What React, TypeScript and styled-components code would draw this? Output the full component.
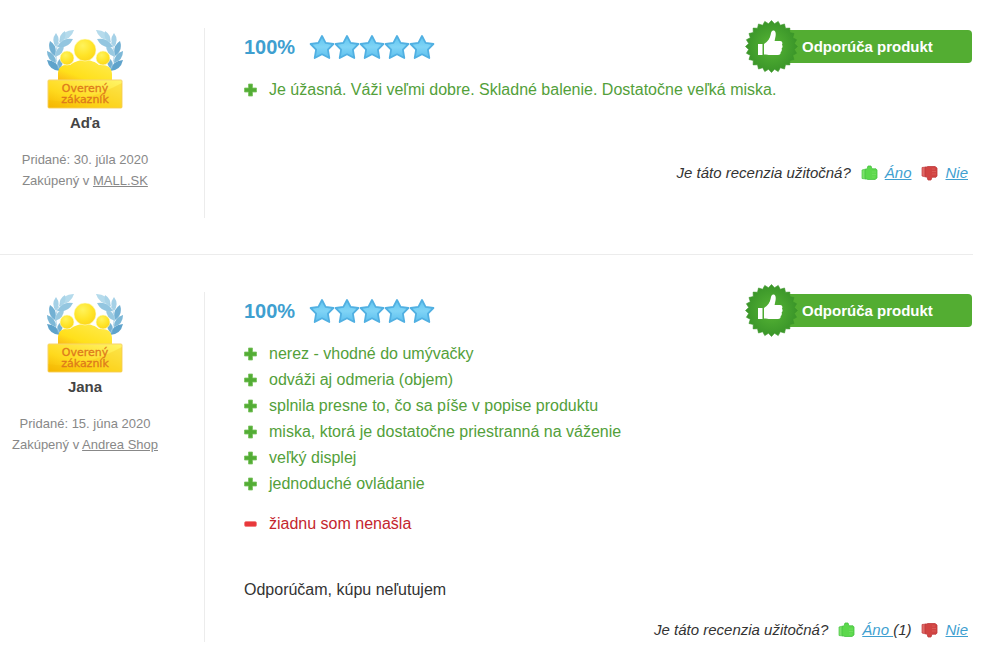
import React from 'react';
import styled, { createGlobalStyle } from 'styled-components';

const GlobalStyle = createGlobalStyle`
  * { box-sizing: border-box; }
  body {
    margin: 0;
    background: #fff;
    color: #333;
    font: 16px/26px "Liberation Sans", Arial, sans-serif;
  }
`;

const ReviewList = styled.main`
  padding-right: 16px;
`;

const ReviewRow = styled.article`
  display: flex;
  padding: 28px 0 36px;

  & + & {
    border-top: 1px solid #ececec;
    padding-top: 37px;
  }
`;

const Author = styled.aside`
  flex: 0 0 204px;
  min-height: 190px;
  padding-right: 34px;
  color: #888;
  text-align: center;

  svg { display: block; margin: 0 auto; }
`;

const AuthorName = styled.h2`
  margin: 0 0 16px;
  color: #444;
  font-size: 15px;
  line-height: 21px;
`;

const Meta = styled.p`
  margin: 0;
  font-size: 13px;
  line-height: 21px;
`;

const ShopLink = styled.a`
  color: inherit;
`;

const Content = styled.div`
  flex: 1;
  min-width: 0;
  border-left: 1px solid #ececec;
  padding-left: 39px;
`;

const Header = styled.header`
  display: flex;
  align-items: center;
  justify-content: space-between;
  padding: 2px 1px 0 0;
  margin-bottom: 14px;
`;

const Rating = styled.div`
  display: flex;
  align-items: center;
  gap: 14px;
  color: #3f9fd0;
  font-size: 20px;
  font-weight: bold;

  svg { display: block; }
`;

const Recommendation = styled.div`
  position: relative;
  width: 201px;
  padding-left: 31px;
  border-radius: 4px;
  background: #53ad32;
  color: #fff;
  font-size: 15px;
  font-weight: bold;
  line-height: 33px;

  svg {
    position: absolute;
    left: -27px;
    top: -11px;
  }
`;

const Body = styled.div`
  min-height: 69px;
`;

const Points = styled.ul<{ $negative?: boolean }>`
  margin: 0;
  padding: 0;
  list-style: none;
  color: ${(p) => (p.$negative ? '#c4262e' : '#53a03a')};

  & + & { margin-top: 14px; }
`;

const Point = styled.li`
  display: flex;
  align-items: center;
  gap: 12px;

  svg { flex: none; }
`;

const Summary = styled.p`
  margin: 40px 0 0;
`;

const Helpful = styled.footer`
  display: flex;
  align-items: center;
  justify-content: flex-end;
  gap: 10px;
  margin-top: 15px;
  padding-right: 5px;
  font-size: 15px;
  font-style: italic;
  line-height: 24px;
`;

const Vote = styled.span`
  display: flex;
  align-items: center;
  gap: 7px;
`;

const VoteLink = styled.a`
  color: #3f9fd0;
  white-space: pre;
`;

interface Leaf {
  base: [number, number];
  tip: [number, number];
  color: string;
}

const leaves: Leaf[] = [
  { base: [13, 41], tip: [0, 30], color: '#5fa3cb' },
  { base: [11, 40], tip: [15, 27], color: '#74b0d2' },
  { base: [9, 33], tip: [0, 21], color: '#7db8d7' },
  { base: [8, 26], tip: [3, 11], color: '#72b0d3' },
  { base: [8, 27], tip: [17, 15], color: '#98c9e1' },
  { base: [9, 17], tip: [9, 3], color: '#a5d1e7' },
  { base: [10, 17], tip: [26, 9], color: '#93c6e0' },
  { base: [13, 10], tip: [27, 0], color: '#b5dbec' },
  { base: [13, 13], tip: [18, 1], color: '#a9d4e8' },
];

function Laurel() {
  return (
    <g>
      {leaves.map(({ base, tip, color }, i) => {
        const dx = tip[0] - base[0];
        const dy = tip[1] - base[1];
        const mx = base[0] + dx * 0.5;
        const my = base[1] + dy * 0.5;
        return (
          <path
            key={i}
            d={`M${base}Q${mx - dy * 0.38} ${my + dx * 0.38} ${tip}Q${mx + dy * 0.38} ${my - dx * 0.38} ${base}Z`}
            fill={color}
          />
        );
      })}
      <path d="M15 43C7 32 7 18 14 9" fill="none" stroke="#a3cde3" strokeWidth=".8" />
    </g>
  );
}

function VerifiedBadge() {
  return (
    <svg width="76" height="84" viewBox="0 0 76 84" role="img" aria-label="Overený zákazník">
      <defs>
        <radialGradient id="head" cx=".4" cy=".3" r=".75">
          <stop offset="0" stopColor="#fff35c" />
          <stop offset=".6" stopColor="#ffe427" />
          <stop offset="1" stopColor="#fcd51a" />
        </radialGradient>
        <linearGradient id="people" x1="0" y1="1" x2="1" y2="0">
          <stop offset="0" stopColor="#fab614" />
          <stop offset=".3" stopColor="#ffe01b" />
          <stop offset="1" stopColor="#ffec51" />
        </linearGradient>
        <linearGradient id="plate" x1="0" y1="1" x2="1" y2="0">
          <stop offset="0" stopColor="#f5b400" />
          <stop offset=".35" stopColor="#ffd91d" />
          <stop offset="1" stopColor="#fff568" />
        </linearGradient>
      </defs>
      <g transform="translate(0 2)">
        <Laurel />
        <g transform="translate(76 0) scale(-1 1)"><Laurel /></g>
        <path d="M11 51V44C11 37 16 34 23 35C28 31 34 30 38 30C43 30 49 32 52 35C60 34 65 38 65 44V51Z" fill="url(#people)" />
        <g fill="url(#head)" stroke="#fffbd0" strokeWidth=".6">
          <circle cx="20" cy="28" r="7" />
          <circle cx="56" cy="28" r="7" />
          <circle cx="38" cy="20" r="11" />
        </g>
        <rect x="1" y="50" width="74" height="28" rx="1" fill="url(#plate)" stroke="#f7d36a" />
        <path d="M1 70Q32 76 75 53V78H1Z" fill="#f4b900" opacity=".25" />
        <g fill="#de7a1c" stroke="#de7a1c" strokeWidth=".3" fontFamily="DejaVu Sans, sans-serif" fontSize="11" textAnchor="middle">
          <text x="38" y="62">Overený</text>
          <text x="38" y="73">zákazník</text>
        </g>
      </g>
    </svg>
  );
}

function Stars() {
  return (
    <svg width="126" height="26" viewBox="0 0 126 26" role="img" aria-label="5 z 5">
      <defs>
        <linearGradient id="star" x1="0" y1="0" x2="0" y2="1">
          <stop offset="0" stopColor="#5ec4ef" />
          <stop offset=".5" stopColor="#80d4f6" />
          <stop offset="1" stopColor="#5cbfee" />
        </linearGradient>
      </defs>
      {[0, 1, 2, 3, 4].map((n) => (
        <path
          key={n}
          transform={`translate(${n * 25} 0)`}
          d="M13 2L16.6 8.8L24.4 10L18.9 15.6L20.3 24L13 20.3L5.7 24L7.1 15.6L1.6 10L9.4 8.8Z"
          fill="url(#star)" stroke="#51b0e2" strokeWidth="1.8" strokeLinejoin="round"
        />
      ))}
    </svg>
  );
}

const sealPoints = Array.from({ length: 48 }, (_, i) => {
  const angle = (i * Math.PI) / 24;
  const radius = i % 2 ? 23 : 26;
  return `${(27.5 + radius * Math.cos(angle)).toFixed(2)},${(27.5 + radius * Math.sin(angle)).toFixed(2)}`;
}).join(' ');

function Seal() {
  return (
    <svg width="55" height="55" viewBox="0 0 55 55" aria-hidden="true">
      <defs>
        <radialGradient id="seal">
          <stop offset="0" stopColor="#5bb637" />
          <stop offset=".5" stopColor="#48a52f" />
          <stop offset="1" stopColor="#3a9529" />
        </radialGradient>
      </defs>
      <polygon points={sealPoints} fill="url(#seal)" stroke="#3a9529" strokeWidth=".6" strokeLinejoin="round" />
      <path d="M14 25H18.5V36H14Z" fill="#fff" />
      <path d="M20 25C24 22.5 26 19.5 26.7 15.5C27 12.8 28 11.5 29.3 11.5C31.6 11.5 32 14 31.6 17L30.6 22H36C38.2 22 39 24 38 25.8C39 27 38.7 28.8 37.6 29.5C38.2 31 37.7 32.4 36.7 33C36.9 35 35.8 36 34 36H26C24 36 23 35.5 20 35.5Z" fill="#fff" />
    </svg>
  );
}

function SignIcon({ negative }: { negative?: boolean }) {
  return (
    <svg width="13" height="14" viewBox="0 0 13 14" aria-hidden="true">
      {negative ? (
        <rect x=".5" y="4.5" width="12" height="5" rx="1.5" fill="#e8383b" stroke="#f27675" strokeWidth=".6" />
      ) : (
        <path d="M4.5 1H8.5V5H12.5V9H8.5V13H4.5V9H.5V5H4.5Z" fill="#53ad35" stroke="#7bc160" strokeWidth=".8" strokeLinejoin="round" />
      )}
    </svg>
  );
}

function ThumbIcon({ down }: { down?: boolean }) {
  const main = down ? '#d14442' : '#5cd84c';
  const edge = down ? '#bf3a3c' : '#48c342';
  const light = down ? '#e06a67' : '#7be26a';
  return (
    <svg width="17" height="16" viewBox="0 0 17 16" aria-hidden="true">
      <g transform={down ? 'translate(0 16) scale(1 -1)' : undefined}>
        <path d="M1 5L5 4V14L1 13.5Z" fill={light} stroke={edge} strokeWidth=".7" />
        <path d="M4 5L6 3.8L7 1H10L11 3.8H15L16 5V13L14 14.5H7L4 13.5Z" fill={main} stroke={edge} strokeWidth=".8" strokeLinejoin="round" />
        <path d="M11 7H15M11 9.5H15M11 12H14" stroke={light} strokeWidth=".6" fill="none" />
      </g>
    </svg>
  );
}

interface Review {
  name: string;
  date: string;
  shop: string;
  pros: string[];
  cons: string[];
  summary?: string;
  yesVotes?: number;
}

const reviews: Review[] = [
  {
    name: 'Aďa',
    date: '30. júla 2020',
    shop: 'MALL.SK',
    pros: ['Je úžasná. Váži veľmi dobre. Skladné balenie. Dostatočne veľká miska.'],
    cons: [],
  },
  {
    name: 'Jana',
    date: '15. júna 2020',
    shop: 'Andrea Shop',
    pros: [
      'nerez - vhodné do umývačky',
      'odváži aj odmeria (objem)',
      'splnila presne to, čo sa píše v popise produktu',
      'miska, ktorá je dostatočne priestranná na váženie',
      'veľký displej',
      'jednoduché ovládanie',
    ],
    cons: ['žiadnu som nenašla'],
    summary: 'Odporúčam, kúpu neľutujem',
    yesVotes: 1,
  },
];

function ReviewItem({ review }: { review: Review }) {
  return (
    <ReviewRow>
      <Author>
        <VerifiedBadge />
        <AuthorName>{review.name}</AuthorName>
        <Meta>Pridané: {review.date}</Meta>
        <Meta>Zakúpený v <ShopLink href="#">{review.shop}</ShopLink></Meta>
      </Author>
      <Content>
        <Header>
          <Rating>100%<Stars /></Rating>
          <Recommendation><Seal />Odporúča produkt</Recommendation>
        </Header>
        <Body>
          <Points>
            {review.pros.map((text) => <Point key={text}><SignIcon />{text}</Point>)}
          </Points>
          {review.cons.length > 0 && (
            <Points $negative>
              {review.cons.map((text) => <Point key={text}><SignIcon negative />{text}</Point>)}
            </Points>
          )}
          {review.summary && <Summary>{review.summary}</Summary>}
        </Body>
        <Helpful>
          <span>Je táto recenzia užitočná?</span>
          <Vote>
            <ThumbIcon />
            <span><VoteLink href="#">{review.yesVotes ? 'Áno ' : 'Áno'}</VoteLink>{review.yesVotes && `(${review.yesVotes})`}</span>
          </Vote>
          <Vote><ThumbIcon down /><VoteLink href="#">Nie</VoteLink></Vote>
        </Helpful>
      </Content>
    </ReviewRow>
  );
}

export default function App() {
  return (
    <>
      <GlobalStyle />
      <ReviewList>
        {reviews.map((review) => <ReviewItem key={review.name} review={review} />)}
      </ReviewList>
    </>
  );
}
